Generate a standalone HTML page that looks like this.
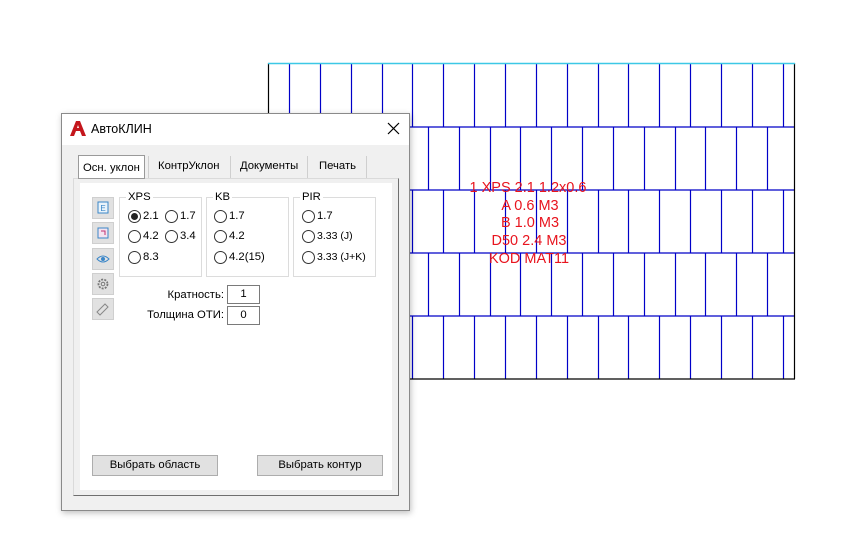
<!DOCTYPE html>
<html><head><meta charset="utf-8"><style>
*{margin:0;padding:0;box-sizing:border-box}
body{width:855px;height:559px;background:#fff;position:relative;overflow:hidden;font-family:"Liberation Sans","DejaVu Sans",sans-serif;font-size:11.3px;color:#000}
.a{position:absolute}
.t{position:absolute;white-space:nowrap;font-size:11.3px;line-height:14px}
.rad{position:absolute;width:13px;height:13px;border:1px solid #333;border-radius:50%;background:#fff}
.rad.on::after{content:"";position:absolute;left:2px;top:2px;width:7px;height:7px;border-radius:50%;background:#222}
.grp{position:absolute;border:1px solid #dcdcdc}
.grp span{position:absolute;top:-8px;left:6px;background:#fff;padding:0 2px;font-size:11.3px;line-height:14px}
.ib{position:absolute;left:92px;width:22px;height:22px;background:#e1e1e1;border:1px solid #cfcfcf}
.btn{position:absolute;top:455px;width:126px;height:21px;background:#e1e1e1;border:1px solid #adadad;text-align:center;line-height:19px;font-size:11.3px}
.box{position:absolute;left:227px;width:33px;height:19px;border:1px solid #7a7a7a;background:#fff;text-align:center;line-height:17px}
</style></head><body>
<svg class="a" style="left:0;top:0" width="855" height="559">
<g stroke="#0000c8" stroke-width="1.2">
<line x1="268" y1="127" x2="795" y2="127"/><line x1="268" y1="190" x2="795" y2="190"/><line x1="268" y1="253" x2="795" y2="253"/><line x1="268" y1="316" x2="795" y2="316"/>
<g id="odd"></g>
</g>
<line x1="268" y1="379" x2="795" y2="379" stroke="#000" stroke-width="1.2"/>
<line x1="268.5" y1="63" x2="268.5" y2="379" stroke="#000" stroke-width="1.2"/>
<line x1="794.5" y1="63" x2="794.5" y2="379" stroke="#000" stroke-width="1.2"/>
<line x1="268" y1="63.5" x2="795" y2="63.5" stroke="#3cc8e6" stroke-width="1.5"/>
<g fill="#e8141e" font-family="Liberation Sans, sans-serif" font-size="14.5" text-anchor="middle">
<text x="528" y="192">1 XPS 2.1 1.2x0.6</text>
<text x="530" y="210">A 0.6 M3</text>
<text x="530" y="227">B 1.0 M3</text>
<text x="529" y="245">D50 2.4 M3</text>
<text x="529" y="263">KOD MAT11</text>
</g>
</svg>
<script>
(function(){var g=document.getElementById('odd'),h='';var rows=[[63,127,289],[127,190,304.4],[190,253,289],[253,316,304.4],[316,379,289]];
rows.forEach(function(r){for(var x=r[2];x<794;x+=30.85){var xx=Math.round(x)+0.5;h+='<line x1="'+xx+'" y1="'+r[0]+'" x2="'+xx+'" y2="'+r[1]+'"/>';}});
g.innerHTML=h;})();
</script>

<div class="a" style="left:61px;top:113px;width:349px;height:398px;background:#f0f0f0;border:1px solid #8a8a8a;box-shadow:1px 2px 6px rgba(0,0,0,.25)"></div>
<div class="a" style="left:62px;top:114px;width:347px;height:31px;background:#fff"></div>
<svg class="a" style="left:70px;top:121px" width="16" height="15"><path d="M0 15 L6 0 L10 0 L16 15 L12 15 L10 10 L6 10 L4 15Z M7 7 L9 7 L8 4Z" fill="#c4161c"/></svg>
<div class="t" style="left:91px;top:122px;font-size:12.5px">АвтоКЛИН</div>
<svg class="a" style="left:387px;top:122px" width="13" height="13"><path d="M1 1L12 12M12 1L1 12" stroke="#000" stroke-width="1.2"/></svg>

<div class="a" style="left:73px;top:178px;width:326px;height:318px;border:1px solid #dadada;border-right:1px solid #6f6f6f;border-bottom:1px solid #6f6f6f;background:#fff"></div>
<div class="a" style="left:74px;top:179px;width:6px;height:316px;background:#f0f0f0"></div>
<div class="a" style="left:392px;top:179px;width:6px;height:316px;background:#f0f0f0"></div>
<div class="a" style="left:74px;top:179px;width:324px;height:4px;background:#f0f0f0"></div>
<div class="a" style="left:74px;top:490px;width:324px;height:5px;background:#f0f0f0"></div>
<div class="a" style="left:78px;top:155px;width:67px;height:24px;background:#fff;border:1px solid #9a9a9a"></div>
<div class="t" style="left:83px;top:161px">Осн. уклон</div>
<div class="a" style="left:148px;top:156px;width:1px;height:22px;background:#cfcfcf"></div>
<div class="t" style="left:158px;top:159px">КонтрУклон</div>
<div class="a" style="left:230px;top:156px;width:1px;height:22px;background:#cfcfcf"></div>
<div class="t" style="left:240px;top:159px">Документы</div>
<div class="a" style="left:307px;top:156px;width:1px;height:22px;background:#cfcfcf"></div>
<div class="t" style="left:319px;top:159px">Печать</div>
<div class="a" style="left:366px;top:156px;width:1px;height:22px;background:#cfcfcf"></div>

<div class="ib" style="top:197px"><svg width="20" height="20"><rect x="5" y="4" width="10" height="11" fill="#eaf4fb" stroke="#3a86c8"/><text x="10" y="13" font-size="8" text-anchor="middle" fill="#3a86c8" font-family="Liberation Sans">E</text></svg></div>
<div class="ib" style="top:222px"><svg width="20" height="20"><rect x="5" y="5" width="10" height="10" fill="#f4e4f0" stroke="#3a86c8"/><path d="M8 8h4v4" stroke="#c03070" fill="none"/></svg></div>
<div class="ib" style="top:248px"><svg width="20" height="20"><path d="M4 10 Q10 4 16 10 Q10 16 4 10Z" fill="none" stroke="#3a86c8"/><circle cx="10" cy="10" r="2" fill="#3a86c8"/></svg></div>
<div class="ib" style="top:273px"><svg width="20" height="20"><circle cx="10" cy="10" r="4.5" fill="none" stroke="#777" stroke-dasharray="2 1.2" stroke-width="1.8"/><circle cx="10" cy="10" r="1.8" fill="none" stroke="#777"/></svg></div>
<div class="ib" style="top:298px"><svg width="20" height="20"><path d="M4 13 L12 5 L15 8 L7 16Z" fill="none" stroke="#888"/></svg></div>

<div class="grp" style="left:119px;top:197px;width:83px;height:80px"><span>XPS</span></div>
<div class="grp" style="left:206px;top:197px;width:83px;height:80px"><span>KB</span></div>
<div class="grp" style="left:293px;top:197px;width:83px;height:80px"><span>PIR</span></div>

<div class="rad on" style="left:128px;top:210px"></div><div class="t" style="left:143px;top:209px">2.1</div>
<div class="rad" style="left:165px;top:210px"></div><div class="t" style="left:180px;top:209px">1.7</div>
<div class="rad" style="left:128px;top:230px"></div><div class="t" style="left:143px;top:229px">4.2</div>
<div class="rad" style="left:165px;top:230px"></div><div class="t" style="left:180px;top:229px">3.4</div>
<div class="rad" style="left:128px;top:251px"></div><div class="t" style="left:143px;top:250px">8.3</div>

<div class="rad" style="left:214px;top:210px"></div><div class="t" style="left:229px;top:209px">1.7</div>
<div class="rad" style="left:214px;top:230px"></div><div class="t" style="left:229px;top:229px">4.2</div>
<div class="rad" style="left:214px;top:251px"></div><div class="t" style="left:229px;top:250px">4.2(15)</div>

<div class="rad" style="left:302px;top:210px"></div><div class="t" style="left:317px;top:209px">1.7</div>
<div class="rad" style="left:302px;top:230px"></div><div class="t" style="left:317px;top:229px;font-size:10.5px">3.33 (J)</div>
<div class="rad" style="left:302px;top:251px"></div><div class="t" style="left:317px;top:250px;font-size:10.5px">3.33 (J+K)</div>

<div class="t" style="right:631px;top:288px">Кратность:</div>
<div class="box" style="top:285px">1</div>
<div class="t" style="right:631px;top:308px">Толщина ОТИ:</div>
<div class="box" style="top:306px">0</div>

<div class="btn" style="left:92px">Выбрать область</div>
<div class="btn" style="left:257px">Выбрать контур</div>
</body></html>
